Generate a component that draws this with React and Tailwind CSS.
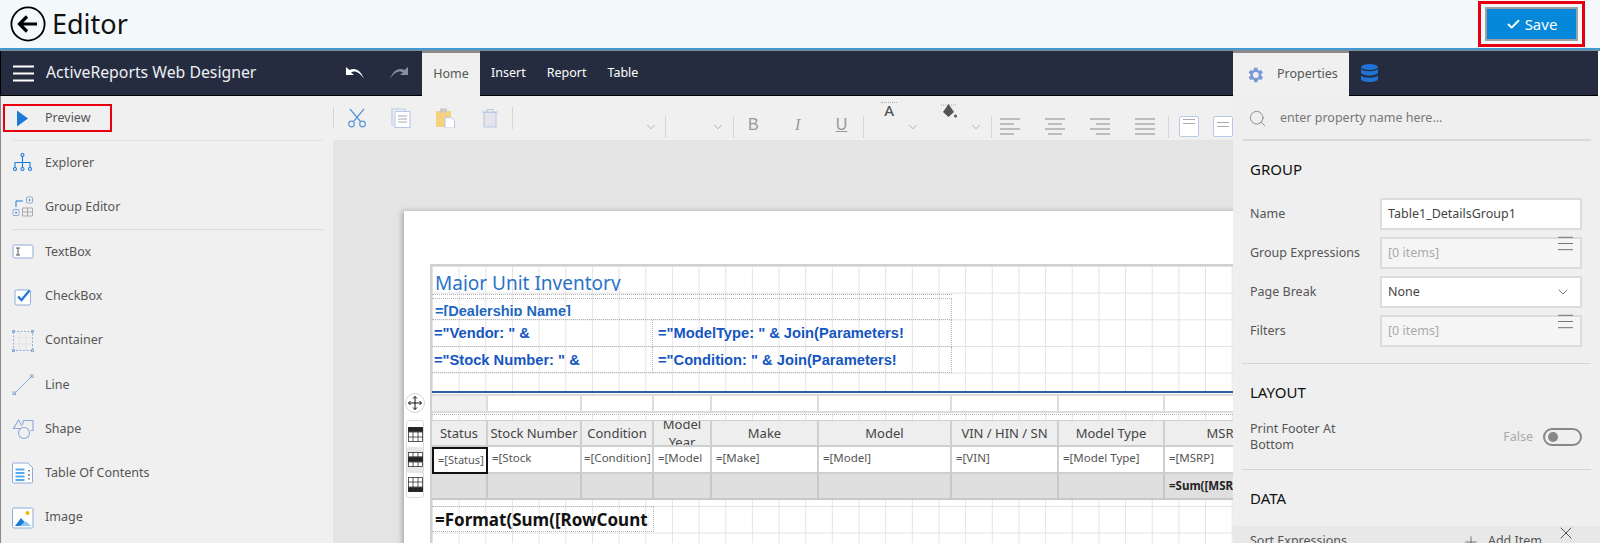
import { Check, ChevronDown, Plus, Search, X } from 'lucide-react'

const FONT = "font-['Noto_Sans',sans-serif]"

const BLUE = '#1a7ad9'
const SOFT = '#8eaadb'

const TABLE_COLS = 'grid-cols-[56px_94px_72px_58px_107px_133px_107px_106px_120px]'

const HEADERS = ['Status', 'Stock Number', 'Condition', 'Model Year', 'Make', 'Model', 'VIN / HIN / SN', 'Model Type', 'MSRP']
const DETAILS = ['=[Status]', '=[Stock Number]', '=[Condition]', '=[Model Year]', '=[Make]', '=[Model]', '=[VIN]', '=[Model Type]', '=[MSRP]']

function BackIcon() {
  return (
    <svg width="36" height="36" viewBox="0 0 36 36" fill="none" stroke="#000">
      <circle cx="18" cy="18" r="16.6" strokeWidth="1.8" />
      <path d="M27 18H10M17 10.5 9.5 18l7.5 7.5" strokeWidth="3.2" />
    </svg>
  )
}

function Hamburger({ className = 'w-[21px] h-[17px] text-white', strokeWidth = 2 }) {
  return (
    <svg viewBox="0 0 21 17" className={className} fill="none" stroke="currentColor" strokeWidth={strokeWidth} preserveAspectRatio="none">
      <path d="M0 1.5h21M0 8.5h21M0 15.5h21" />
    </svg>
  )
}

const ICONS = {
  preview: <path d="M5 3.5v16L16 11.5z" fill={BLUE} />,
  explorer: (
    <g fill="none" stroke={BLUE} strokeWidth="1.1">
      <circle cx="10.5" cy="3" r="1.5" />
      <circle cx="3" cy="17" r="1.5" />
      <circle cx="10.5" cy="17" r="1.5" />
      <circle cx="18" cy="17" r="1.5" />
      <path d="M10.5 4.500v11M3 15.500V10.500h15v5" />
    </g>
  ),
  group: (
    <g fill="none" strokeWidth="1">
      <path d="M4 11V5h7" stroke={BLUE} />
      <rect x="14.500" y="1" width="6" height="6" rx="1" stroke={SOFT} />
      <rect x="1" y="13.500" width="6" height="6" rx="1" stroke={SOFT} />
      <rect x="16.800" y="3.300" width="1.500" height="1.500" fill={BLUE} stroke="none" />
      <rect x="3.300" y="15.800" width="1.500" height="1.500" fill={BLUE} stroke="none" />
      <path d="M10.500 12h10v8h-10zM15.500 12v8M10.500 16h10" stroke="#aaa" />
    </g>
  ),
  textbox: (
    <g fill="none">
      <rect x="1" y="4" width="20" height="13" rx="1.500" fill="#fff" stroke={SOFT} />
      <path d="M4 7h4M6 7v7M4 14h4" stroke="#555" />
    </g>
  ),
  checkbox: (
    <g fill="none">
      <rect x="3" y="4" width="15.500" height="15" rx="1.500" fill="#fff" stroke={SOFT} />
      <path d="M6 10.500l3.500 3.500 8-9.500" stroke={BLUE} strokeWidth="2.200" />
    </g>
  ),
  container: (
    <g fill="none" stroke={SOFT}>
      <rect x="1.500" y="1.500" width="19" height="19" strokeDasharray="2 1.500" />
      <path d="M1.500 7.500h19M1.500 14h19M7.500 1.500v19M14 1.500v19" stroke="#e3e3e8" />
      <rect x="0.500" y="0.500" width="2" height="2" />
      <rect x="19.500" y="0.500" width="2" height="2" />
      <rect x="0.500" y="19.500" width="2" height="2" />
      <rect x="19.500" y="19.500" width="2" height="2" />
    </g>
  ),
  line: (
    <g fill="none" stroke={SOFT}>
      <path d="M2.500 19.500 19.500 2.500" />
      <rect x="1" y="18" width="2.500" height="2.500" />
      <rect x="18.500" y="1" width="2.500" height="2.500" />
    </g>
  ),
  shape: (
    <g fill="none" stroke={SOFT} strokeWidth="1.100">
      <path d="M9 10.500H1.500L6.500 2l3.500 6" />
      <path d="M11 2.500h10v10h-2.500M11 2.500v4" />
      <circle cx="12" cy="15" r="5.500" fill="#f0f0f0" />
    </g>
  ),
  toc: (
    <g fill="none">
      <path d="M1.500 1h14.500l4.500 4.500V20a1 1 0 0 1-1 1H1.500a1 1 0 0 1-1-1V2a1 1 0 0 1 1-1z" fill="#fff" stroke={SOFT} />
      <path d="M3.500 7.500h9M3.500 11h9M3.500 14.500h9M3.500 18h9" stroke="#5aa9ee" strokeWidth="1.800" />
      <path d="M17 8v1.500M17 12v1.500M17 16v1.500" stroke="#555" strokeWidth="1.400" />
    </g>
  ),
  image: (
    <g>
      <rect x="0.500" y="1" width="20.500" height="20" rx="1.500" fill="#fff" stroke={SOFT} />
      <circle cx="15.500" cy="6" r="2" fill="#f7b500" />
      <path d="M3 19l6-8 3.500 4-2.500 4z" fill={BLUE} />
      <path d="M8 19l5.500-5 5.500 5z" fill="#8ac4f5" />
    </g>
  ),
}

const TOOLS = [
  ['TextBox', 'textbox'],
  ['CheckBox', 'checkbox'],
  ['Container', 'container'],
  ['Line', 'line'],
  ['Shape', 'shape'],
  ['Table Of Contents', 'toc'],
  ['Image', 'image'],
]

function SideItem({ label, icon }) {
  return (
    <div className="h-[44.2px] shrink-0 flex items-center pl-[11px] gap-[11px] text-[12.5px] text-[#555]">
      <svg width="22" height="22" viewBox="0 0 22 22" className="shrink-0">{ICONS[icon]}</svg>
      <span>{label}</span>
    </div>
  )
}

function Sidebar() {
  return (
    <aside className="w-[333px] shrink-0 bg-[#f0f0f0] border-l border-[#8a8a8a] flex flex-col">
      <div className="h-[44px] shrink-0 flex items-center pl-[2px]">
        <div className="w-[109px] h-[28px] border-2 border-[#e8000f] flex items-center pl-[7px] gap-[13px] text-[12.5px] text-[#555]">
          <svg width="20" height="22" viewBox="0 0 20 22" className="shrink-0">{ICONS.preview}</svg>
          <span>Preview</span>
        </div>
      </div>
      <div className="mx-[11px] w-[311px] border-t border-[#e2e2e2]" />
      <SideItem label="Explorer" icon="explorer" />
      <SideItem label="Group Editor" icon="group" />
      <div className="mx-[11px] w-[311px] border-t border-[#dcdcdc]" />
      {TOOLS.map(([label, icon]) => <SideItem key={label} label={label} icon={icon} />)}
    </aside>
  )
}

function ToolSvg({ children, w = 20, h = 20 }) {
  return <svg width={w} height={h} viewBox={`0 0 ${w} ${h}`} fill="none" className="shrink-0">{children}</svg>
}

function Sep({ tall }) {
  return <div className={`w-px bg-[#d5d5d5] shrink-0 ${tall ? 'h-[22px] mt-[20px]' : 'h-[22px] mt-[11px]'}`} />
}

function Chevron({ className }) {
  return <ChevronDown className={`shrink-0 text-[#888] ${className}`} size={14} strokeWidth={1} />
}

function AlignIcon({ kind }) {
  const lines = {
    left: 'M0 1h20M0 6h14M0 11h20M0 16h14',
    center: 'M0 1h20M3 6h14M0 11h20M3 16h14',
    right: 'M0 1h20M6 6h14M0 11h20M6 16h14',
    justify: 'M0 1h20M0 6h20M0 11h20M0 16h20',
  }
  return (
    <svg width="20" height="17" viewBox="0 0 20 17" fill="none" stroke="#aaa" strokeWidth="1.300" className="shrink-0">
      <path d={lines[kind]} />
    </svg>
  )
}

function Toolbar() {
  return (
    <div className="h-[44px] shrink-0 bg-[#f0f0f0] flex items-start overflow-hidden">
      <Sep />
      <div className="ml-[13px] mt-[12px]">
        <ToolSvg w={20} h={20}>
          <g stroke="#5b93d8" strokeWidth="1.200">
            <path d="M3 1l10.500 12.500M17 1 6.500 13.500" />
            <circle cx="4.500" cy="16" r="2.800" />
            <circle cx="15.500" cy="16" r="2.800" />
          </g>
        </ToolSvg>
      </div>
      <div className="ml-[24px] mt-[12px]">
        <ToolSvg w={20} h={20}>
          <g stroke="#b9c8e6" strokeWidth="1.100">
            <path d="M3 17H1V1h13v2" />
            <rect x="4" y="3.500" width="15" height="16" fill="#fff" />
            <path d="M7 8h9M7 11h9M7 14h9" stroke="#a9a9a9" />
          </g>
        </ToolSvg>
      </div>
      <div className="ml-[24px] mt-[12px]">
        <ToolSvg w={20} h={20}>
          <rect x="1" y="3" width="15" height="16" fill="#f5d27d" />
          <rect x="5" y="0.500" width="7" height="4" fill="#c9c9c9" />
          <path d="M10 9.500h6l3.500 3.500v7H10z" fill="#fff" stroke="#b9c8e6" />
        </ToolSvg>
      </div>
      <div className="ml-[26px] mt-[12px]">
        <ToolSvg w={18} h={20}>
          <g stroke="#b9c8e6" strokeWidth="1.100">
            <path d="M1 4h16M6 4V1.500h6V4" />
            <path d="M3 4.500h12V19H3z" fill="#e4e4ea" />
          </g>
        </ToolSvg>
      </div>
      <div className="ml-[13px]"><Sep /></div>
      <div className="ml-[131px] mt-[24px]"><Chevron /></div>
      <div className="ml-[7px]"><Sep tall /></div>
      <div className="ml-[45px] mt-[24px]"><Chevron /></div>
      <div className="ml-[8px]"><Sep tall /></div>
      <span className="ml-[14px] mt-[19px] w-[10px] text-[16px] leading-[20px] text-[#999] font-['Liberation_Sans',sans-serif]">B</span>
      <span className="ml-[37px] mt-[19px] w-[10px] text-[16px] leading-[20px] text-[#999] italic font-['Liberation_Serif',serif]">I</span>
      <span className="ml-[32px] mt-[19px] w-[12px] text-[16px] leading-[20px] text-[#999] underline font-['Liberation_Sans',sans-serif]">U</span>
      <div className="ml-[16px]"><Sep tall /></div>
      <div className="ml-[17px] mt-[6px] w-[18px] text-center text-[15px] leading-[15px] font-medium text-[#555] border-t border-dotted border-[#aaa]">A</div>
      <div className="ml-[9px] mt-[24px]"><Chevron /></div>
      <div className="ml-[20px] mt-[6px]">
        <ToolSvg w={18} h={17}>
          <path d="M1 3h16" stroke="#aaa" strokeDasharray="1 1" />
          <path d="M8.500 2 3 10l5.500 5 5.500-5z" fill="#555" />
          <circle cx="15.500" cy="14" r="1.500" fill="#555" />
        </ToolSvg>
      </div>
      <div className="ml-[11px] mt-[24px]"><Chevron /></div>
      <div className="ml-[8px]"><Sep tall /></div>
      <div className="ml-[8px] mt-[22px] flex gap-[25px]">
        <AlignIcon kind="left" />
        <AlignIcon kind="center" />
        <AlignIcon kind="right" />
        <AlignIcon kind="justify" />
      </div>
      <div className="ml-[13px]"><Sep tall /></div>
      <div className="ml-[10px] mt-[20px] w-[20px] h-[21px] shrink-0 bg-white border border-[#b9c8e6] rounded-[2px] px-[3px] pt-[2px]">
        <div className="border-t border-b border-[#aaa] h-[5px]" />
      </div>
      <div className="ml-[14px] mt-[20px] w-[20px] h-[21px] shrink-0 bg-white border border-[#b9c8e6] rounded-[2px] px-[3px] pt-[5px]">
        <div className="border-t border-b border-[#aaa] h-[5px]" />
      </div>
    </div>
  )
}

function DotBox({ className, children }) {
  return (
    <div className={`absolute overflow-hidden border border-dotted border-[#b5b5b5] ${className}`}>
      {children}
    </div>
  )
}

function ReportHeader() {
  const text = "font-['Liberation_Sans',sans-serif] font-bold text-[14.700px] text-[#1556c0] leading-[26px] whitespace-nowrap"
  return (
    <>
      <DotBox className="left-0 top-0 w-[520px] h-[29px] border-t-0 border-l-0 border-r-0">
        <div className="h-[25px] overflow-hidden">
          <p className="pl-[3px] pt-[2px] text-[19px] leading-[30px] text-[#2a73c6]">Major Unit Inventory</p>
        </div>
      </DotBox>
      <DotBox className="left-0 top-[32px] w-[520px] h-[22px] border-l-0">
        <div className="h-[17px] overflow-hidden">
          <p className="pl-[3px] pt-[1px] font-['Liberation_Sans',sans-serif] font-bold text-[14.500px] leading-[22px] text-[#2068c0]">=[Dealership Name]</p>
        </div>
      </DotBox>
      <DotBox className={`left-0 top-[54px] w-[221px] h-[27px] border-l-0 border-t-0 pl-[2px] ${text}`}>="Vendor: " &amp;</DotBox>
      <DotBox className={`left-[221px] top-[54px] w-[299px] h-[27px] border-t-0 border-l-0 pl-[5px] ${text}`}>="ModelType: " &amp; Join(Parameters!</DotBox>
      <DotBox className={`left-0 top-[81px] w-[221px] h-[26px] border-l-0 border-t-0 pl-[2px] ${text}`}>="Stock Number: " &amp;</DotBox>
      <DotBox className={`left-[221px] top-[81px] w-[299px] h-[26px] border-t-0 border-l-0 pl-[5px] ${text}`}>="Condition: " &amp; Join(Parameters!</DotBox>
    </>
  )
}

function ReportTable() {
  return (
    <div className="absolute left-0 top-[125px] w-[853px]">
      <div className="h-[2px] bg-[#2e5ea8]" />
      <div className={`grid ${TABLE_COLS} h-[20px] pt-[1px]`}>
        {HEADERS.map((h, i) => (
          <div key={h} className={`border-2 border-[#dcdcdc] border-l-0 ${i === 0 ? 'bg-[#f0f0f0]' : 'bg-white'}`} />
        ))}
      </div>
      <div className="mt-[1px] h-[1px] border-t border-dotted border-[#b5b5b5]" />
      <div className={`grid ${TABLE_COLS} mt-[5px] grid-rows-[26px_27px_26px] bg-white border-t border-[#cfcfcf]`}>
        {HEADERS.map((h) => (
          <div key={h} className="bg-[#eeeeee] border-r-2 border-b-2 border-[#cfcfcf] overflow-hidden flex items-center justify-center text-center text-[13px] leading-[18px] text-[#444] px-[1px]">
            {h}
          </div>
        ))}
        {DETAILS.map((d, i) => (
          <div key={d} className={`overflow-hidden text-[11.500px] leading-[18px] pt-[2px] text-[#555] ${i === 0 ? 'border-2 border-[#111] text-[11px] pl-[1px] pt-[1px]' : 'bg-white border-r-2 border-b-2 border-[#cfcfcf]'} ${i === 2 ? 'whitespace-nowrap pl-[2px]' : 'pl-[4px]'}`}>
            {d}
          </div>
        ))}
        {HEADERS.map((h, i) => (
          <div key={h} className="bg-[#dfdfdf] border-r-2 border-b-2 border-[#c8c8c8] overflow-hidden text-[11.500px] font-bold text-[#222] pl-[4px] pt-[4px] leading-[15px] whitespace-nowrap">
            {i === 8 ? '=Sum([MSRP])' : ''}
          </div>
        ))}
      </div>
      <DotBox className="left-0 top-[115px] w-[222px] h-[26px] border-l-0 whitespace-nowrap text-[17px] leading-[26px] font-bold text-[#111] pl-[3px]">
        =Format(Sum([RowCount
      </DotBox>
    </div>
  )
}

function TableHandles() {
  const icon = (dark) => (
    <svg width="15" height="15" viewBox="0 0 15 15" fill="none" stroke="#333" strokeWidth="0.800">
      <rect x="0.500" y="0.500" width="14" height="14" fill="#fff" />
      <rect x="0" y={dark} width="15" height="4.500" fill="#222" />
      <path d="M5 0v15M10 0v15M0 5h15M0 10h15" />
    </svg>
  )
  return (
    <>
      <div className="absolute left-[-27px] top-[127px] w-[20px] h-[20px] rounded-full bg-white border border-[#d5d5d5] flex items-center justify-center">
        <svg width="14" height="14" viewBox="0 0 14 14" fill="none" stroke="#111" strokeWidth="1">
          <path d="M7 0.500v13M0.500 7h13M5 2.500l2-2 2 2M5 11.500l2 2 2-2M2.500 5l-2 2 2 2M11.500 5l2 2-2 2" />
        </svg>
      </div>
      <div className="absolute left-[-26px] top-[154px] w-[18px] h-[78px] bg-white border border-[#dcdcdc] rounded-[3px] flex flex-col">
        <div className="h-[27px] flex items-center justify-center">{icon(0)}</div>
        <div className="h-[26px] flex items-center justify-center bg-[#e8e8e8]">{icon(5)}</div>
        <div className="h-[25px] flex items-center justify-center">{icon(10.500)}</div>
      </div>
    </>
  )
}

function Canvas() {
  return (
    <div className="flex-1 min-h-0 bg-[#e4e4e4] pl-[71px] pt-[71px] overflow-hidden">
      <div className="h-[600px] w-[900px] bg-white shadow-[-2px_0_5px_rgba(0,0,0,0.25)] pl-[26px] pt-[53px]">
        <div className="relative h-[400px] w-[860px] border-l-2 border-t-2 border-[#d0d0d0] bg-[linear-gradient(to_right,#e3e3e3_1px,transparent_1px),linear-gradient(to_bottom,#e3e3e3_1px,transparent_1px)] bg-[size:26.670px_26.670px]">
          <ReportHeader />
          <TableHandles />
          <ReportTable />
        </div>
      </div>
    </div>
  )
}

function Field({ label, value, muted, select, menu }) {
  return (
    <div className="flex items-center h-[32px] mb-[7px] text-[12.5px]">
      <span className="w-[130px] shrink-0 text-[#555]">{label}</span>
      <div className={`relative w-[202px] h-[32px] border-2 border-[#dcdcdc] flex items-center pl-[6px] ${muted ? 'bg-[#f5f5f5] text-[#aaa]' : 'bg-white text-[#444]'}`}>
        {value}
        {select && <ChevronDown className="absolute right-[9px] top-[6px] text-[#555]" size={16} strokeWidth={1.200} />}
        {menu && (
          <div className="absolute right-[7px] top-[-3px]">
            <Hamburger className="w-[15px] h-[15px] text-[#555]" strokeWidth={1} />
          </div>
        )}
      </div>
    </div>
  )
}

function SectionTitle({ children }) {
  return <h3 className="text-[15px] leading-[20px] text-[#111]">{children}</h3>
}

function PropertiesPanel() {
  return (
    <section className="flex-1 min-h-0 bg-[#efefef] relative flex flex-col overflow-hidden">
      <div className="h-[45px] shrink-0 mx-[9px] pt-[2px] border-b-2 border-[#dadada] flex items-center pl-[6px] gap-[13px]">
        <Search size={19} strokeWidth={1} className="text-[#777]" />
        <span className="text-[12.5px] text-[#777]">enter property name here...</span>
      </div>
      <div className="pl-[17px] pr-[18px] pt-[18px]">
        <SectionTitle>GROUP</SectionTitle>
        <div className="mt-[19px]">
          <Field label="Name" value="Table1_DetailsGroup1" />
          <Field label="Group Expressions" value="[0 items]" muted menu />
          <Field label="Page Break" value="None" select />
          <Field label="Filters" value="[0 items]" muted menu />
        </div>
      </div>
      <div className="mx-[9px] mt-[9px] border-t border-[#d5d5d5]" />
      <div className="pl-[17px] pr-[18px] pt-[18px]">
        <SectionTitle>LAYOUT</SectionTitle>
        <div className="mt-[19px] flex items-center justify-between text-[12.5px] leading-[16px] text-[#555]">
          <span>Print Footer At<br />Bottom</span>
          <div className="flex items-center gap-[10px]">
            <span className="text-[#aaa]">False</span>
            <div className="w-[39px] h-[18px] rounded-full border-2 border-[#888] flex items-center pl-[3px]">
              <div className="w-[10px] h-[10px] rounded-full bg-[#888]" />
            </div>
          </div>
        </div>
      </div>
      <div className="mx-[9px] mt-[16px] border-t border-[#d5d5d5]" />
      <div className="pl-[17px] pt-[18px]">
        <SectionTitle>DATA</SectionTitle>
      </div>
      <div className="absolute left-0 right-0 top-[430px] h-[40px] bg-[#e8e8e8] pl-[17px] pr-[18px] pt-[6px] flex items-start text-[12.5px] text-[#555]">
        <span className="flex-1">Sort Expressions</span>
        <Plus size={18} strokeWidth={1} className="text-[#555] mr-[8px] mt-[1px]" />
        <span className="mr-[40px]">Add Item</span>
        <X size={20} strokeWidth={1} className="absolute right-[24px] top-[-3px] text-[#333]" />
      </div>
    </section>
  )
}

export default function App() {
  return (
    <div className={`h-[543px] w-full overflow-hidden flex flex-col bg-white ${FONT}`}>
      <header className="h-[48px] shrink-0 bg-[#f3f8fb] flex items-center pl-[10px] pr-[15px]">
        <BackIcon />
        <h1 className="ml-[6px] text-[27px] leading-[36px] text-[#111]">Editor</h1>
        <div className="ml-auto w-[107px] h-[46px] border-[3px] border-[#e8000f] flex items-center justify-center">
          <button className="w-[93px] h-[34px] border-2 border-[#a0a0a0] bg-[#0588da] text-white text-[15px] flex items-center justify-center gap-[4px]">
            <Check size={15} strokeWidth={3} />
            Save
          </button>
        </div>
      </header>
      <div className="h-[2px] shrink-0 bg-[#3f9ad3]" />
      <div className="h-[1px] shrink-0 bg-[#8a8a8a]" />
      <div className="flex-1 min-h-0 flex">
        <div className="w-[1233px] shrink-0 flex flex-col">
          <nav className="h-[45px] shrink-0 bg-[#262c40] border-l border-black border-b flex items-stretch text-white text-[12.5px]">
            <div className="w-[345px] flex items-center pl-[12px]">
              <Hamburger />
              <span className="ml-[12px] text-[15.800px] text-[#eef0f4]">ActiveReports Web Designer</span>
            </div>
            <div className="w-[76px] flex items-center gap-[26px]">
              <svg width="18" height="12" viewBox="0 0 18 12" fill="#fff"><path d="M0 0v8h8L5 5.500C8 3.500 13 4 18 12 15 3 9 0 3.500 3z" /></svg>
              <svg width="18" height="12" viewBox="0 0 18 12" fill="#8a8f9e"><path d="M18 0v8h-8l3-2.500C10 3.500 5 4 0 12 3 3 9 0 14.500 3z" /></svg>
            </div>
            <div className="w-[58px] -mb-px bg-[#f0f0f0] border-t-2 border-[#8a8a8a] flex items-center justify-center text-[#555]">Home</div>
            <div className="flex items-center pl-[11px] gap-[21px]">
              <span>Insert</span>
              <span>Report</span>
              <span>Table</span>
            </div>
          </nav>
          <div className="flex-1 min-h-0 flex">
            <Sidebar />
            <div className="flex-1 min-w-0 flex flex-col">
              <Toolbar />
              <Canvas />
            </div>
          </div>
        </div>
        <div className="flex-1 min-w-0 flex flex-col">
          <div className="h-[45px] shrink-0 flex">
            <div className="w-[116px] bg-[#f0f0f0] border-t-2 border-[#8a8a8a] flex items-center pl-[12px] gap-[12px] text-[12.5px] text-[#555]">
              <svg width="20" height="20" viewBox="0 0 24 24" fill="#7b97d6">
                <path d="M19.400 13a7.500 7.500 0 0 0 0-2l2.100-1.600-2-3.500-2.500 1a7.500 7.500 0 0 0-1.700-1L15 3.200h-4l-.4 2.700a7.500 7.500 0 0 0-1.700 1l-2.500-1-2 3.500L6.500 11a7.500 7.500 0 0 0 0 2l-2.100 1.600 2 3.500 2.500-1a7.500 7.500 0 0 0 1.700 1l.4 2.700h4l.4-2.700a7.500 7.500 0 0 0 1.700-1l2.500 1 2-3.500zM13 15.500a3.500 3.500 0 1 1 0-7 3.500 3.500 0 0 1 0 7z" />
              </svg>
              Properties
            </div>
            <div className="flex-1 bg-[#262c40] border-b border-black mr-[2px] flex items-center pl-[12px]">
              <svg width="17" height="18" viewBox="0 0 17 18" fill="#1f74d6">
                <ellipse cx="8.500" cy="3" rx="8.500" ry="3" />
                <path d="M0 5c1.500 1.500 4.500 2.200 8.500 2.200S15.500 6.500 17 5v3.500c0 1.600-3.800 3-8.500 3S0 10.100 0 8.500z" />
                <path d="M0 11.500c1.500 1.500 4.500 2.200 8.500 2.200s7-.7 8.500-2.200V15c0 1.600-3.800 3-8.500 3S0 16.600 0 15z" />
              </svg>
            </div>
          </div>
          <PropertiesPanel />
        </div>
      </div>
    </div>
  )
}
